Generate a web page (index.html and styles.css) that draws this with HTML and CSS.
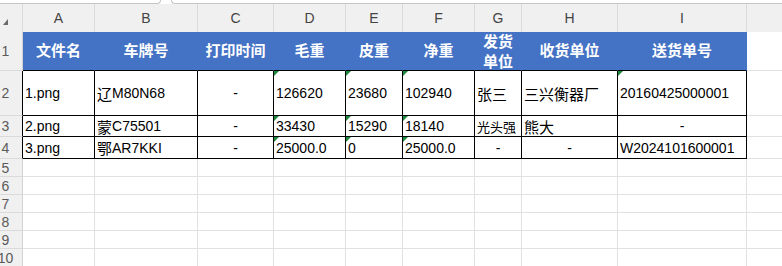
FILE: index.html
```html
<!DOCTYPE html>
<html lang="zh-CN">
<head>
<meta charset="utf-8">
<title>车辆称重记录</title>
<link rel="stylesheet" href="styles.css">
</head>
<body>
<div class="tabs">
  <div class="tab tab-left"></div>
  <div class="tab tab-right"></div>
</div>
<div class="sheet">
  <!-- column letters -->
  <div class="ch corner"><span class="corner-mark"></span></div>
  <div class="ch">A</div><div class="ch">B</div><div class="ch">C</div><div class="ch">D</div><div class="ch">E</div><div class="ch">F</div><div class="ch">G</div><div class="ch">H</div><div class="ch">I</div><div class="ch">J</div>

  <!-- row 1: titles -->
  <div class="rh">1</div>
  <div class="th">文件名</div>
  <div class="th">车牌号</div>
  <div class="th">打印时间</div>
  <div class="th">毛重</div>
  <div class="th">皮重</div>
  <div class="th">净重</div>
  <div class="th two">发货<br>单位</div>
  <div class="th">收货单位</div>
  <div class="th">送货单号</div>
  <div class="c"></div>

  <!-- row 2 -->
  <div class="rh rh-data">2</div>
  <div class="td">1.png</div>
  <div class="td"><span class="zh">辽</span>M80N68</div>
  <div class="td mid">-</div>
  <div class="td txt">126620</div>
  <div class="td txt">23680</div>
  <div class="td txt">102940</div>
  <div class="td"><span class="zh">张三</span></div>
  <div class="td"><span class="zh">三兴衡器厂</span></div>
  <div class="td txt">20160425000001</div>
  <div class="c"></div>

  <!-- row 3 -->
  <div class="rh rh-data">3</div>
  <div class="td">2.png</div>
  <div class="td"><span class="zh">蒙</span>C75501</div>
  <div class="td mid">-</div>
  <div class="td txt">33430</div>
  <div class="td txt">15290</div>
  <div class="td txt">18140</div>
  <div class="td"><span class="zh shrink">光头强</span></div>
  <div class="td"><span class="zh">熊大</span></div>
  <div class="td mid">-</div>
  <div class="c"></div>

  <!-- row 4 -->
  <div class="rh rh-data">4</div>
  <div class="td">3.png</div>
  <div class="td"><span class="zh">鄂</span>AR7KKI</div>
  <div class="td mid">-</div>
  <div class="td txt">25000.0</div>
  <div class="td txt">0</div>
  <div class="td txt">25000.0</div>
  <div class="td mid">-</div>
  <div class="td mid">-</div>
  <div class="td">W2024101600001</div>
  <div class="c"></div>

  <!-- empty rows -->
  <div class="rh">5</div><div class="c"></div><div class="c"></div><div class="c"></div><div class="c"></div><div class="c"></div><div class="c"></div><div class="c"></div><div class="c"></div><div class="c"></div><div class="c"></div>
  <div class="rh">6</div><div class="c"></div><div class="c"></div><div class="c"></div><div class="c"></div><div class="c"></div><div class="c"></div><div class="c"></div><div class="c"></div><div class="c"></div><div class="c"></div>
  <div class="rh">7</div><div class="c"></div><div class="c"></div><div class="c"></div><div class="c"></div><div class="c"></div><div class="c"></div><div class="c"></div><div class="c"></div><div class="c"></div><div class="c"></div>
  <div class="rh">8</div><div class="c"></div><div class="c"></div><div class="c"></div><div class="c"></div><div class="c"></div><div class="c"></div><div class="c"></div><div class="c"></div><div class="c"></div><div class="c"></div>
  <div class="rh">9</div><div class="c"></div><div class="c"></div><div class="c"></div><div class="c"></div><div class="c"></div><div class="c"></div><div class="c"></div><div class="c"></div><div class="c"></div><div class="c"></div>
  <div class="rh">10</div><div class="c"></div><div class="c"></div><div class="c"></div><div class="c"></div><div class="c"></div><div class="c"></div><div class="c"></div><div class="c"></div><div class="c"></div><div class="c"></div>
</div>
</body>
</html>
```

FILE: styles.css
```css
html, body {
  margin: 0;
  padding: 0;
  background: #ffffff;
  overflow: hidden;
}

body {
  width: 782px;
  height: 266px;
  font-family: "Liberation Sans", "Noto Sans CJK SC", sans-serif;
  font-size: 14px;
  color: #000;
}

/* thin toolbar edge above the grid */
.tabs {
  display: flex;
  height: 4px;
  gap: 10px;
  overflow: hidden;
}

.tab {
  box-sizing: border-box;
  height: 4px;
  border-bottom: 1px solid #c4c4c4;
  background: #fff;
}

.tab-left {
  width: 161px;
  border-right: 1px solid #c4c4c4;
  border-bottom-right-radius: 4px;
}

.tab-right {
  flex: 1;
  border-left: 1px solid #c4c4c4;
  border-bottom-left-radius: 4px;
}

.sheet {
  display: grid;
  grid-template-columns: 23px 72px 103px 76px 72px 57px 72px 47px 96px 129px 80px;
  grid-template-rows: 28px 39px 45px 21px 22px repeat(6, 18px);
  width: 827px;
}

.sheet > div {
  box-sizing: border-box;
  border-right: 1px solid #e1e1e1;
  border-bottom: 1px solid #e1e1e1;
  display: flex;
  align-items: center;
  white-space: nowrap;
  overflow: hidden;
}

/* column letters */
.sheet > .ch {
  background: #f0f0f0;
  color: #444;
  font-size: 14px;
  justify-content: center;
  border-right-color: #dadada;
  border-bottom-color: #f0f0f0;
}

.sheet > .corner {
  position: relative;
  justify-content: flex-start;
}

.corner-mark {
  position: absolute;
  left: 3px;
  top: 15px;
  width: 0;
  height: 0;
  border-left: 5px solid transparent;
  border-bottom: 6px solid #6a6a6a;
}

/* row numbers */
.sheet > .rh {
  background: #f0f0f0;
  color: #5a5a5a;
  font-size: 14px;
  justify-content: center;
  padding-right: 11px;
  border-right-color: #d2d2d2;
  border-bottom-color: #dadada;
}

.sheet > .rh-data {
  border-right-color: #000;
}

/* title row */
.sheet > .th {
  background: #4472c4;
  color: #fff;
  font-weight: bold;
  font-size: 15px;
  justify-content: center;
  text-align: center;
  line-height: 20px;
  border-right-color: #4472c4;
  border-bottom-color: #000;
}

.sheet > .th.two {
  padding-top: 2px;
}

/* bordered data cells */
.sheet > .td {
  position: relative;
  padding-left: 2px;
  border-right-color: #000;
  border-bottom-color: #000;
}

.sheet > .td.mid {
  justify-content: center;
  padding-left: 0;
}

.zh {
  font-family: "Noto Sans CJK SC", sans-serif;
  font-size: 15px;
}

/* shrink-to-fit in the narrow column */
.zh.shrink {
  font-size: 13px;
}

/* numbers stored as text get the small green corner flag */
.sheet > .td.txt::before {
  content: "";
  position: absolute;
  left: 0;
  top: 0;
  width: 0;
  height: 0;
  border-top: 5px solid #1f8a3b;
  border-right: 5px solid transparent;
}
```
